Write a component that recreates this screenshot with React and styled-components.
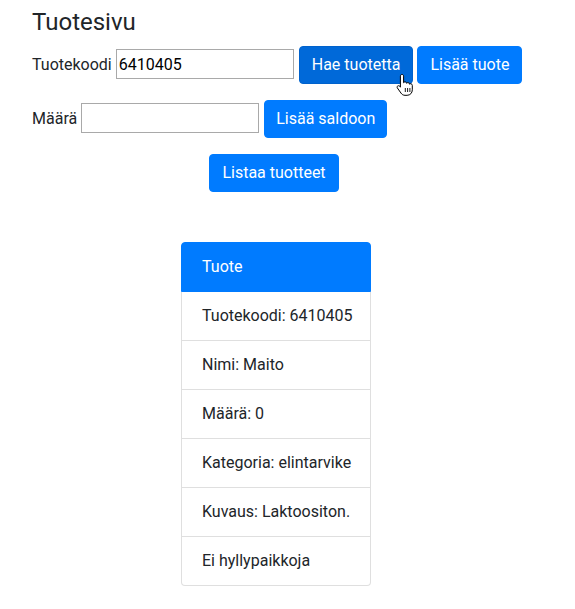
import React from "react"
import styled, { createGlobalStyle } from "styled-components"

const Global = createGlobalStyle`
  body {
    margin: 0;
    background: #fff;
    font-family: "Segoe UI", Roboto, "Noto Sans", Arial, sans-serif;
    color: #212529;
    font-size: 16px;
  }
`

const Page = styled.div`
  width: 552px;
  padding: 8px 0 0 32px;
  box-sizing: border-box;
`

const Title = styled.h3`
  margin: 0 0 9px 0;
  font-size: 24px;
  font-weight: 400;
  line-height: 1.2;
`

const Row = styled.div`
  display: flex;
  align-items: baseline;
  justify-content: ${p => (p.center ? "center" : "flex-start")};
  margin-bottom: 16px;
  padding-right: ${p => (p.center ? "32px" : "0")};
  white-space: nowrap;
`

const Label = styled.label`
  margin-right: 4px;
`

const Input = styled.input`
  width: 178px;
  height: 30px;
  box-sizing: border-box;
  border: 1px solid #a9a9a9;
  padding: 1px 2px;
  font: inherit;
  font-size: 16px;
  color: #000;
  margin-right: 5px;
`

const Button = styled.button`
  position: relative;
  font: inherit;
  font-size: 16px;
  line-height: 24px;
  color: #fff;
  background: ${p => (p.hover ? "#0069d9" : "#007bff")};
  border: 1px solid ${p => (p.hover ? "#0062cc" : "#007bff")};
  border-radius: 4px;
  padding: 6px ${p => (p.tight ? "11px" : "12px")};
  margin-right: 4px;
  cursor: pointer;
`

const Cursor = styled.svg`
  position: absolute;
  right: -4px;
  top: 26px;
  pointer-events: none;
`

const ListWrap = styled.div`
  display: flex;
  justify-content: center;
  padding-right: 32px;
  margin-top: 50px;
`

const List = styled.ul`
  list-style: none;
  margin: 0;
  padding: 0;
  width: 190px;
`

const Item = styled.li`
  padding: 12px 20px;
  line-height: 24px;
  white-space: nowrap;
  border: 1px solid ${p => (p.active ? "#007bff" : "rgba(0,0,0,0.125)")};
  border-top-width: ${p => (p.first ? "1px" : "0")};
  background: ${p => (p.active ? "#007bff" : "#fff")};
  color: ${p => (p.active ? "#fff" : "#212529")};
  &:first-child {
    border-radius: 4px 4px 0 0;
  }
  &:last-child {
    border-radius: 0 0 4px 4px;
  }
`

const rows = [
  "Tuotekoodi: 6410405",
  "Nimi: Maito",
  "Määrä: 0",
  "Kategoria: elintarvike",
  "Kuvaus: Laktoositon.",
  "Ei hyllypaikkoja",
]

export default function App() {
  return (
    <>
      <Global />
      <Page>
        <Title>Tuotesivu</Title>
        <Row>
          <Label>Tuotekoodi</Label>
          <Input defaultValue="6410405" />
          <Button hover>
            Hae tuotetta
            <Cursor width="20" height="24" viewBox="0 0 20 24">
              <path
                d="M6 1.5c1 0 1.6.7 1.6 1.6v6.6c.3-.6 1-.9 1.7-.8.8.1 1.3.7 1.3 1.4.3-.5.9-.8 1.6-.7.8.1 1.3.8 1.3 1.6.3-.4.9-.6 1.5-.5.8.2 1.3.9 1.3 1.7v4.4c0 3-2 5.5-5.2 5.5H9c-1.8 0-3-.8-4-2.2L1.4 15c-.5-.8-.3-1.7.4-2.1.7-.4 1.5-.2 2 .4l.6.9V3.1C4.4 2.2 5 1.5 6 1.5z"
                fill="#fff"
                stroke="#000"
                strokeWidth="1"
              />
              <path d="M9.3 15v4M11.6 15v4M13.9 15v4" stroke="#000" strokeWidth="0.9" />
            </Cursor>
          </Button>
          <Button>Lisää tuote</Button>
        </Row>
        <Row>
          <Label>Määrä</Label>
          <Input />
          <Button tight>Lisää saldoon</Button>
        </Row>
        <Row center>
          <Button>Listaa tuotteet</Button>
        </Row>
        <ListWrap>
          <List>
            <Item active first>Tuote</Item>
            {rows.map(r => (
              <Item key={r}>{r}</Item>
            ))}
          </List>
        </ListWrap>
      </Page>
    </>
  )
}
